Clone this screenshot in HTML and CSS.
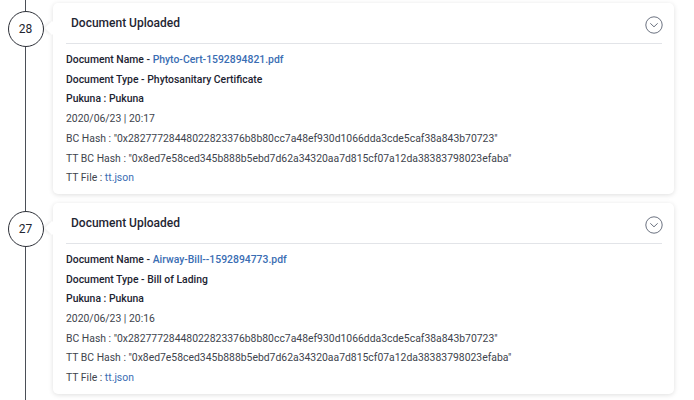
FILE: index.html
```
<!DOCTYPE html>
<html>
<head>
<meta charset="utf-8">
<link rel="stylesheet" href="styles.css">
</head>
<body>
<div class="timeline">
  <div class="item">
    <div class="rail">
      <span class="seg-top"></span>
      <span class="num">28</span>
      <span class="seg-bottom"></span>
    </div>
    <div class="card">
      <div class="card-head">
        <span class="title">Document Uploaded</span>
        <svg class="toggle" width="18" height="18" viewBox="0 0 18 18"><circle cx="9" cy="9" r="8.2" fill="none" stroke="#6b7280" stroke-width="1"/><path d="M5.6 7.6 L9 10.8 L12.4 7.6" fill="none" stroke="#6b7280" stroke-width="1" stroke-linecap="round" stroke-linejoin="round"/></svg>
      </div>
      <div class="card-body">
        <div class="row strong">Document Name - <span class="link">Phyto-Cert-1592894821.pdf</span></div>
        <div class="row strong">Document Type - Phytosanitary Certificate</div>
        <div class="row strong">Pukuna : Pukuna</div>
        <div class="row">2020/06/23 | 20:17</div>
        <div class="row">BC Hash : "0x28277728448022823376b8b80cc7a48ef930d1066dda3cde5caf38a843b70723"</div>
        <div class="row">TT BC Hash : "0x8ed7e58ced345b888b5ebd7d62a34320aa7d815cf07a12da38383798023efaba"</div>
        <div class="row">TT File : <span class="link">tt.json</span></div>
      </div>
    </div>
  </div>
  <div class="item">
    <div class="rail">
      <span class="seg-top"></span>
      <span class="num">27</span>
      <span class="seg-bottom"></span>
    </div>
    <div class="card">
      <div class="card-head">
        <span class="title">Document Uploaded</span>
        <svg class="toggle" width="18" height="18" viewBox="0 0 18 18"><circle cx="9" cy="9" r="8.2" fill="none" stroke="#6b7280" stroke-width="1"/><path d="M5.6 7.6 L9 10.8 L12.4 7.6" fill="none" stroke="#6b7280" stroke-width="1" stroke-linecap="round" stroke-linejoin="round"/></svg>
      </div>
      <div class="card-body">
        <div class="row strong">Document Name - <span class="link">Airway-Bill--1592894773.pdf</span></div>
        <div class="row strong">Document Type - Bill of Lading</div>
        <div class="row strong">Pukuna : Pukuna</div>
        <div class="row">2020/06/23 | 20:16</div>
        <div class="row">BC Hash : "0x28277728448022823376b8b80cc7a48ef930d1066dda3cde5caf38a843b70723"</div>
        <div class="row">TT BC Hash : "0x8ed7e58ced345b888b5ebd7d62a34320aa7d815cf07a12da38383798023efaba"</div>
        <div class="row">TT File : <span class="link">tt.json</span></div>
      </div>
    </div>
  </div>
</div>
</body>
</html>
```
FILE: styles.css
```
html, body {
  margin: 0;
  padding: 0;
  background: #ffffff;
  font-family: Roboto, "Liberation Sans", Arial, sans-serif;
  color: #3f4450;
}
.timeline {
  display: flex;
  flex-direction: column;
  height: 400px;
  overflow: hidden;
}
.item {
  display: flex;
  flex-direction: row;
  align-items: stretch;
}
.rail {
  width: 53px;
  flex: 0 0 53px;
  display: flex;
  flex-direction: column;
  align-items: center;
  padding-right: 2px;
  box-sizing: border-box;
}
.seg-top {
  width: 1px;
  height: 11px;
  background: #4b4f57;
}
.seg-bottom {
  width: 1px;
  flex: 1;
  background: #4b4f57;
}
.num {
  width: 36px;
  height: 36px;
  border: 1px solid #2d3038;
  border-radius: 50%;
  box-sizing: border-box;
  display: flex;
  align-items: center;
  justify-content: center;
  font-size: 12px;
  color: #222530;
  background: #fff;
}
.card {
  position: relative;
  flex: 1;
  margin: 3px 20px 6px 0;
  background: #fff;
  border-radius: 5px;
  box-shadow: 0 1px 5px rgba(0, 0, 0, 0.13);
}
.card::before {
  content: "";
  position: absolute;
  left: -6px;
  top: 20px;
  width: 10px;
  height: 10px;
  background: #fff;
  transform: rotate(45deg);
  box-shadow: -2px 2px 3px rgba(0, 0, 0, 0.06);
}
.card-head {
  height: 40px;
  display: flex;
  align-items: center;
  justify-content: space-between;
  margin: 0 12px 0 13px;
  padding: 0 0 0 5px;
  border-bottom: 1px solid #e2e4e8;
}
.title {
  font-size: 12px;
  font-weight: 500;
  color: #1f2633;
}
.toggle {
  margin-right: -1px;
  margin-top: 4px;
}
.card-body {
  padding: 6px 13px 6px;
}
.row {
  font-size: 10.4px;
  line-height: 19.7px;
  color: #40444d;
  white-space: nowrap;
}
.row.strong {
  font-weight: 500;
  color: #1c2331;
}
.link {
  color: #3a6db3;
  font-weight: 400;
}
.row.strong .link {
  font-weight: 500;
}
```
